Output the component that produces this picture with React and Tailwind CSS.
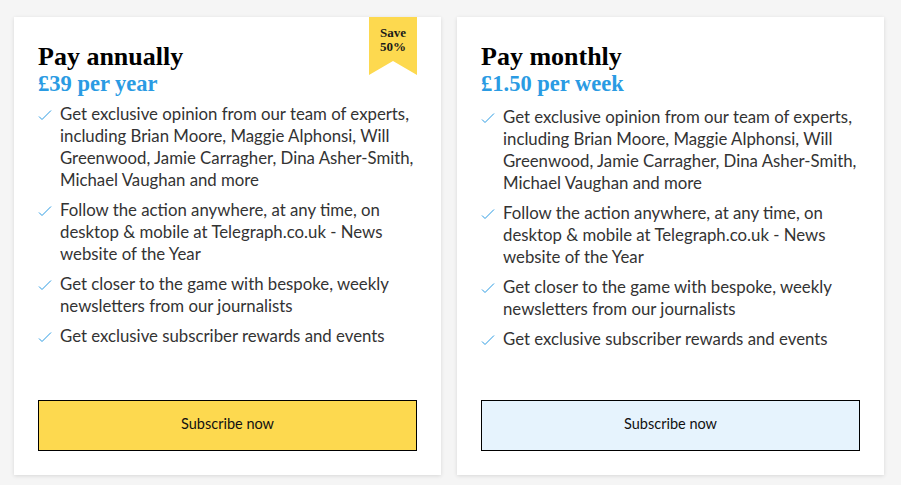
const benefits = [
  "Get exclusive opinion from our team of experts, including Brian Moore, Maggie Alphonsi, Will Greenwood, Jamie Carragher, Dina Asher-Smith, Michael Vaughan and more",
  "Follow the action anywhere, at any time, on desktop & mobile at Telegraph.co.uk - News website of the Year",
  "Get closer to the game with bespoke, weekly newsletters from our journalists",
  "Get exclusive subscriber rewards and events",
];

function Tick() {
  return (
    <svg width="14" height="12" viewBox="0 0 14 12" className="mt-[6px] shrink-0">
      <path d="M1 7.5 L4 10.5 L13 1.5" fill="none" stroke="#2a9be3" strokeWidth="1" />
    </svg>
  );
}

function Plan({ title, price, badge, buttonClass, listClass }) {
  return (
    <div className="relative flex h-[458px] w-[427px] flex-col bg-white px-6 pb-6 shadow-[0_1px_4px_rgba(0,0,0,0.12)]">
      {badge ? (
        <div className="absolute top-0 right-6 flex h-[58px] w-[48px] flex-col items-center bg-[#fdd94f] pt-[9px] text-[13px] leading-[14px] font-bold text-[#1a1a1a] [clip-path:polygon(0_0,100%_0,100%_100%,50%_76%,0_100%)] [font-family:'Liberation_Serif',serif]">
          <span>Save</span>
          <span>50%</span>
        </div>
      ) : null}
      <h2 className="mt-[25px] text-[26px] leading-[30px] font-bold text-black [font-family:'Liberation_Serif',serif]">
        {title}
      </h2>
      <p className="text-[22.5px] leading-[24px] font-bold text-[#2a9be3] [font-family:'Liberation_Serif',serif]">
        {price}
      </p>
      <ul className={"flex flex-col gap-[8px] " + listClass}>
        {benefits.map((b) => (
          <li key={b} className="flex gap-[8px] text-[16.8px] leading-[22px] text-[#333]">
            <Tick />
            <span>{b}</span>
          </li>
        ))}
      </ul>
      <button
        className={
          "mt-auto flex h-[51px] w-full items-center justify-center border-[1.5px] border-black pb-[3px] text-[14.5px] text-[#111] " +
          buttonClass
        }
      >
        Subscribe now
      </button>
    </div>
  );
}

export default function App() {
  return (
    <div className="flex h-[485px] w-[901px] gap-4 bg-[#f5f5f5] pt-[17px] pl-[14px] [font-family:Lato,sans-serif]">
      <Plan
        title="Pay annually"
        price="£39 per year"
        badge
        buttonClass="bg-[#fdd94f]"
        listClass="mt-[7px]"
      />
      <Plan
        title="Pay monthly"
        price="£1.50 per week"
        buttonClass="bg-[#e6f3fd]"
        listClass="mt-[10px]"
      />
    </div>
  );
}
